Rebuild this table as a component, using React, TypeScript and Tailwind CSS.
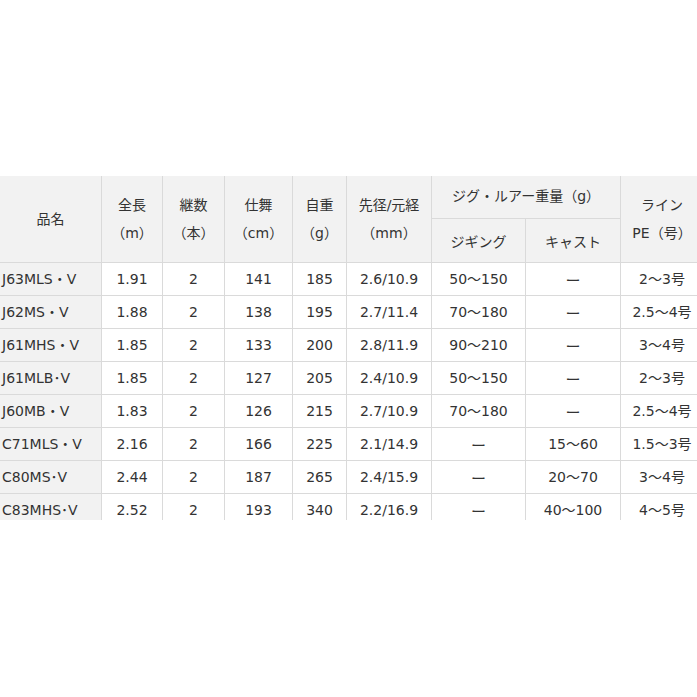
import React from "react";

const D = "ー";

const rows = [
  ["J63MLS・V", "1.91", "2", "141", "185", "2.6/10.9", "50～150", D, "2～3号"],
  ["J62MS・V", "1.88", "2", "138", "195", "2.7/11.4", "70～180", D, "2.5～4号"],
  ["J61MHS・V", "1.85", "2", "133", "200", "2.8/11.9", "90～210", D, "3～4号"],
  ["J61MLB･V", "1.85", "2", "127", "205", "2.4/10.9", "50～150", D, "2～3号"],
  ["J60MB・V", "1.83", "2", "126", "215", "2.7/10.9", "70～180", D, "2.5～4号"],
  ["C71MLS・V", "2.16", "2", "166", "225", "2.1/14.9", D, "15～60", "1.5～3号"],
  ["C80MS･V", "2.44", "2", "187", "265", "2.4/15.9", D, "20～70", "3～4号"],
  ["C83MHS･V", "2.52", "2", "193", "340", "2.2/16.9", D, "40～100", "4～5号"],
];

const hdr = "bg-[#f2f2f2] flex flex-col items-center justify-center text-center leading-[28px]";

export default function App() {
  return (
    <div
      className="w-[697px] h-[697px] overflow-hidden bg-white pt-[176px] text-[#333] text-[14px]"
      style={{ fontFamily: '"DejaVu Sans", Verdana, "Noto Sans CJK JP", sans-serif' }}
    >
      <div className="h-[344px] overflow-hidden">
        <div className="grid w-[702px] gap-px bg-[#dadada] grid-cols-[101px_60px_61px_67px_53px_84px_93px_94px_82px] grid-rows-[42px_43px_repeat(8,32px)]">
          <div className={`${hdr} row-span-2`}>品名</div>
          <div className={`${hdr} row-span-2`}><span>全長</span><span>（m）</span></div>
          <div className={`${hdr} row-span-2`}><span>継数</span><span>（本）</span></div>
          <div className={`${hdr} row-span-2`}><span>仕舞</span><span>（cm）</span></div>
          <div className={`${hdr} row-span-2`}><span>自重</span><span>（g）</span></div>
          <div className={`${hdr} row-span-2`}><span>先径/元経</span><span>（mm）</span></div>
          <div className={`${hdr} col-span-2 pb-[2px]`}>ジグ・ルアー重量（g）</div>
          <div className={`${hdr} row-span-2`}><span>ライン</span><span>PE（号）</span></div>
          <div className={`${hdr} pt-[2px]`}>ジギング</div>
          <div className={`${hdr} pt-[2px]`}>キャスト</div>
          {rows.map((r, i) => (
            <React.Fragment key={i}>
              {r.map((c, j) =>
                j === 0 ? (
                  <div key={j} className="bg-[#f2f2f2] flex items-center pl-[2px] whitespace-nowrap">{c}</div>
                ) : c === D ? (
                  <div key={j} className="bg-white flex items-center justify-center whitespace-nowrap">
                    <span className="font-['Noto_Sans_CJK_JP',sans-serif] text-[15px] leading-none">{c}</span>
                  </div>
                ) : (
                  <div key={j} className="bg-white flex items-center justify-center whitespace-nowrap">{c}</div>
                )
              )}
            </React.Fragment>
          ))}
        </div>
      </div>
    </div>
  );
}
